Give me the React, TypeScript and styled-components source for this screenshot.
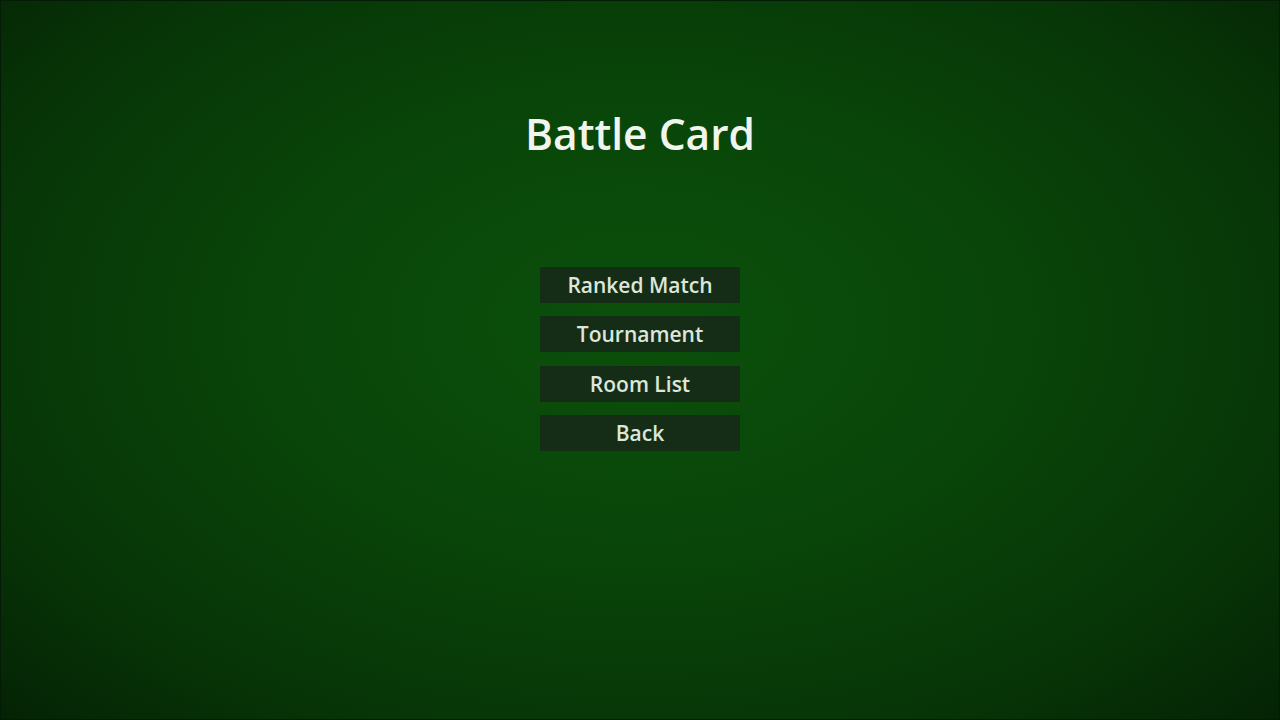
import React from "react";
import styled, { createGlobalStyle } from "styled-components";

const Global = createGlobalStyle`
  html, body { margin: 0; padding: 0; }
  body { font-family: "Open Sans", "Liberation Sans", sans-serif; }
`;

const Screen = styled.div`
  width: 1280px;
  height: 720px;
  box-sizing: border-box;
  border: 1px solid #041c05;
  background: radial-gradient(ellipse 72% 80% at 50% 45%, #0b500b 0%, #094509 40%, #073407 75%, #042104 100%);
  display: flex;
  flex-direction: column;
  align-items: center;
  overflow: hidden;
`;

const Title = styled.h1`
  margin: 105px 0 0;
  font-size: 42.5px;
  line-height: 56px;
  font-weight: 600;
  color: #f1f5ee;
`;

const Menu = styled.nav`
  margin-top: 105px;
  display: flex;
  flex-direction: column;
  gap: 13.3px;
`;

const MenuButton = styled.button`
  width: 200px;
  height: 36px;
  padding: 0;
  border: none;
  background: #152d17;
  color: #dde6da;
  font-family: "Open Sans", "Liberation Sans", sans-serif;
  font-size: 21px;
  font-weight: 600;
  cursor: pointer;
`;

const items = ["Ranked Match", "Tournament", "Room List", "Back"];

export default function App() {
  return (
    <>
      <Global />
      <Screen>
        <Title>Battle Card</Title>
        <Menu>
          {items.map((t) => (
            <MenuButton key={t}>{t}</MenuButton>
          ))}
        </Menu>
      </Screen>
    </>
  );
}
